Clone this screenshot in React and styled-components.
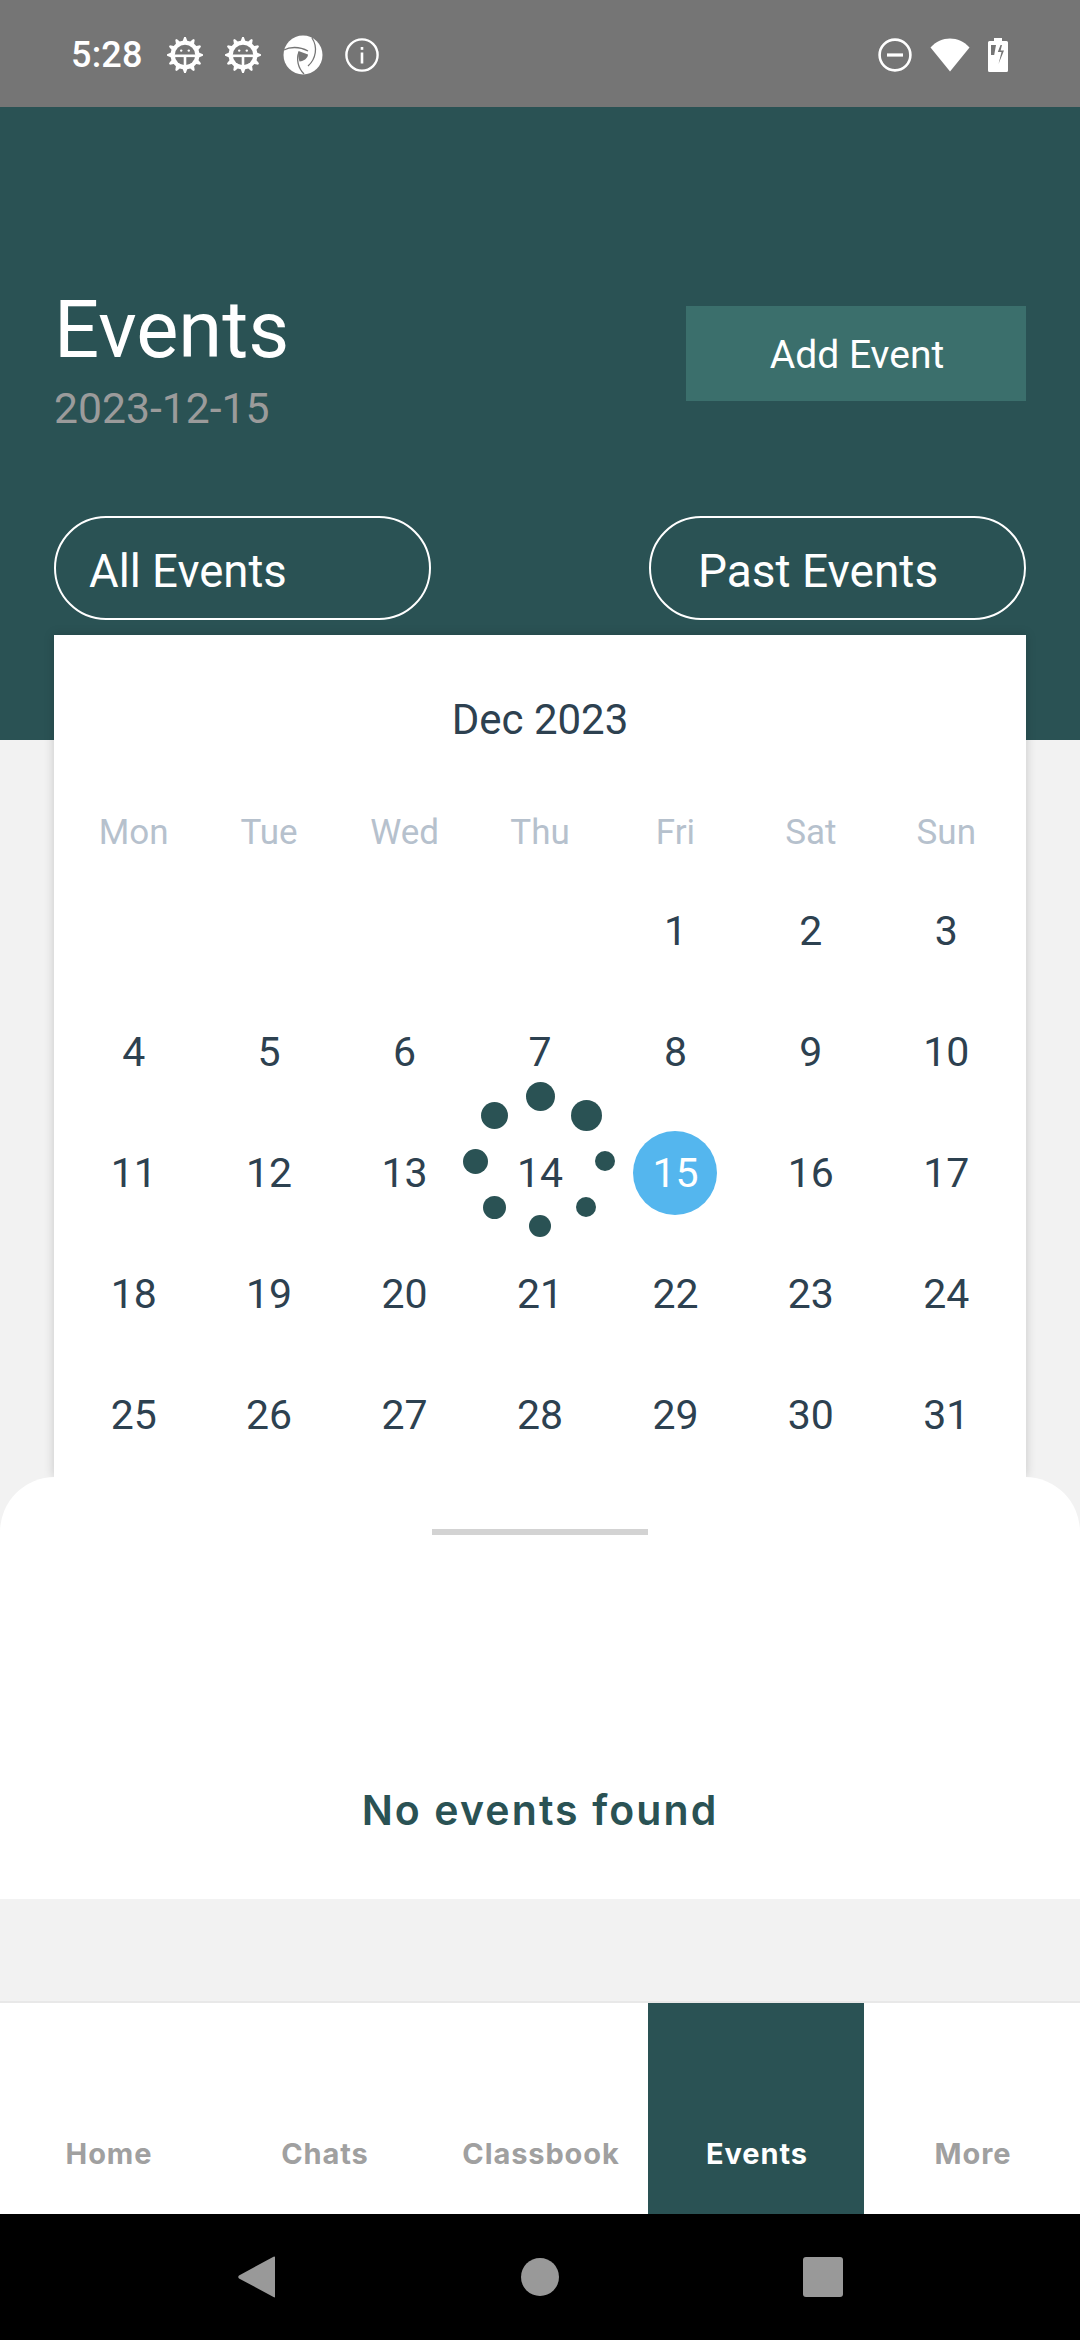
import React from "react";
import styled, { createGlobalStyle } from "styled-components";

const Global = createGlobalStyle`
  html, body { margin: 0; padding: 0; background: #f2f2f2; }
  * { box-sizing: border-box; }
`;

const TEAL = "#2a5254";
const Root = styled.div`
  position: relative; width: 1080px; height: 2340px; overflow: hidden;
  display: flex; flex-direction: column; background: #f2f2f2;
  font-family: Roboto, "Liberation Sans", sans-serif;
`;
const StatusBar = styled.div`
  height: 107px; flex: none; background: #757575; color: #fff;
  display: flex; align-items: center; justify-content: space-between;
  padding: 2px 72px 0 71px;
`;
const StatusGroup = styled.div`
  display: flex; align-items: center; gap: ${p => p.$gap}px;
`;
const Clock = styled.span`
  font-size: 36px; font-weight: 500; letter-spacing: 0.2px; margin-right: 2px; line-height: 1;
`;
const Header = styled.header`
  height: 633px; flex: none; background: ${TEAL};
  padding: 178px 54px 0; display: flex; flex-direction: column;
`;
const TopRow = styled.div`
  display: flex; justify-content: space-between; align-items: flex-start; height: 148px;
`;
const Title = styled.h1`
  margin: 0; font-size: 79.5px; line-height: 90px; font-weight: 400; color: #fff;
`;
const DateText = styled.div`
  margin-top: 9px; font-size: 42.7px; line-height: 48px; color: #9b9b9b;
`;
const AddButton = styled.button`
  margin-top: 21px; width: 340px; height: 95px; border: 0; background: #3b6f6c; color: #fff;
  font: 400 39px Roboto, sans-serif; padding: 3px 0 0 2px;
`;
const FilterRow = styled.div`
  margin-top: 83px; display: flex; justify-content: space-between;
`;
const Pill = styled.div`
  width: 377px; height: 104px; border: 2.5px solid #fff; border-radius: 52px; color: #fff;
  font-size: ${p => p.$size}px; padding: 6px 0 0 ${p => p.$inset}px; display: flex; align-items: center;
`;
const Calendar = styled.section`
  margin: -105px 54px 0; height: 842px; flex: none; background: #fff; color: #2d4150;
  box-shadow: 0 0 10px rgba(0,0,0,.18); padding: 44px 12px 0; position: relative;
`;
const Month = styled.div`
  height: 80px; margin-bottom: 36px; display: flex; align-items: center; justify-content: center;
  font-size: 42px;
`;
const Grid = styled.div`
  display: grid; grid-template-columns: repeat(7, 1fr);
`;
const WeekDay = styled.div`
  height: 75px; display: flex; align-items: center; justify-content: center;
  font-size: 35px; color: #b6c1cd;
`;
const Day = styled.div`
  height: 121px; display: flex; align-items: center; justify-content: center;
  font-size: 41px; font-weight: 400;
`;
const Selected = styled.span`
  width: 84px; height: 84px; border-radius: 50%; background: #54b6ee; color: #fff;
  display: flex; align-items: center; justify-content: center;
`;
const Sheet = styled.section`
  position: relative; height: 422px; flex: none; background: #fff;
  border-radius: 55px 55px 0 0; display: flex; flex-direction: column; align-items: center;
`;
const Handle = styled.div`
  width: 216px; height: 6px; margin-top: 52px; background: #d3d3d3;
`;
const Empty = styled.div`
  margin-top: 250px; font: 600 41px "Inter", sans-serif; letter-spacing: 2.1px;
  color: ${TEAL}; line-height: 50px;
`;
const Nav = styled.nav`
  margin-top: auto; height: 213px; flex: none; background: #fff; border-top: 2px solid #e8e8e8;
  display: grid; grid-template-columns: repeat(5, 216px);
`;
const NavItem = styled.div`
  background: ${p => (p.$active ? TEAL : "transparent")};
  color: ${p => (p.$active ? "#fff" : "#a0a0a0")};
  font: 700 29px "Inter", sans-serif; letter-spacing: 0.9px; text-align: center;
  padding: 133px 0 0 2px; line-height: 36px;
`;
const SystemBar = styled.div`
  height: 126px; flex: none; background: #000; display: flex; align-items: center;
  justify-content: center;
`;
const SysSlot = styled.div`
  width: 283px; display: flex; justify-content: center;
`;
const Spinner = styled.div`
  position: absolute; left: 0; top: 0; width: 0; height: 0;
`;
const Dot = styled.span`
  position: absolute; border-radius: 50%; background: ${TEAL};
  left: ${p => p.$x - p.$d / 2}px; top: ${p => p.$y - p.$d / 2}px;
  width: ${p => p.$d}px; height: ${p => p.$d}px;
`;

const gearPoints = (() => {
  const pts = [];
  const n = 12;
  for (let i = 0; i < n; i++) {
    const a = (i / n) * Math.PI * 2 - Math.PI / 2;
    const w = (Math.PI / n) * 0.45;
    const p = (r, t) => `${(18 + r * Math.cos(t)).toFixed(2)},${(18 + r * Math.sin(t)).toFixed(2)}`;
    pts.push(p(14.5, a - w * 1.3), p(18, a - w * 0.4), p(18, a + w * 0.4), p(14.5, a + w * 1.3));
  }
  return pts.join(" ");
})();

const Gear = () => (
  <svg width="36" height="36" viewBox="0 0 36 36">
    <polygon points={gearPoints} fill="#fff" />
    <circle cx="18" cy="18" r="10.2" fill="#757575" />
    <rect x="7.5" y="17.5" width="21" height="2.6" fill="#fff" />
    <rect x="16.7" y="18" width="2.6" height="11" fill="#fff" />
    <circle cx="14.2" cy="13.6" r="1.2" fill="#fff" />
    <circle cx="21.8" cy="13.6" r="1.2" fill="#fff" />
  </svg>
);
const Shutter = () => (
  <svg width="40" height="40" viewBox="0 0 40 40">
    <circle cx="20" cy="20" r="19.5" fill="#fff" />
    <g fill="none" stroke="#757575" strokeWidth="1.3">
      <path d="M1 15 C6 12 16 11 25 16" />
      <path d="M29 3 C35 12 33 24 25 31" />
      <path d="M16 17 C13 24 15 33 21 39" />
    </g>
    <path d="M15.5 16 L25 19.5 C25 23 21 26 16.5 26.5 C15 23 15 19 15.5 16Z" fill="#757575" />
  </svg>
);
const Info = () => (
  <svg width="34" height="34" viewBox="0 0 34 34">
    <circle cx="17" cy="17" r="15.6" fill="none" stroke="#fff" strokeWidth="2.4" />
    <rect x="15.7" y="14.5" width="2.6" height="11" fill="#fff" />
    <rect x="15.7" y="9" width="2.6" height="2.8" fill="#fff" />
  </svg>
);
const Dnd = () => (
  <svg width="34" height="34" viewBox="0 0 34 34">
    <circle cx="17" cy="17" r="15.4" fill="none" stroke="#fff" strokeWidth="2.6" />
    <rect x="9" y="15.4" width="16" height="3.2" fill="#fff" />
  </svg>
);
const Wifi = () => (
  <svg width="40" height="34" viewBox="0 0 40 34">
    <path d="M0.5 9.5 C11 -2.5 29 -2.5 39.5 9.5 L20 33.5 Z" fill="#fff" />
  </svg>
);
const Battery = () => (
  <svg width="20" height="34" viewBox="0 0 20 34">
    <path d="M6 0 H14 V3 H18.5 Q20 3 20 4.5 V32.5 Q20 34 18.5 34 H1.5 Q0 34 0 32.5 V4.5 Q0 3 1.5 3 H6 Z" fill="#fff" />
    <path d="M8 7 H3 V17 H6.2 Z M12.5 7 L9.8 14 H13.5 L10.5 26 L16 12.5 H12.6 L14 7 Z" fill="#757575" />
  </svg>
);
const Back = () => (
  <svg width="38" height="42" viewBox="0 0 38 42">
    <path d="M37 1.5 V40.5 Q37 42 35.5 41 L1 22.5 Q-0.5 21 1 19.5 L35.5 0.8 Q37 0 37 1.5Z" fill="#999" />
  </svg>
);
const Home = () => (
  <svg width="38" height="38" viewBox="0 0 38 38"><circle cx="19" cy="19" r="19" fill="#999" /></svg>
);
const Recents = () => (
  <svg width="40" height="40" viewBox="0 0 40 40"><rect width="40" height="40" rx="3" fill="#999" /></svg>
);

const weekDays = ["Mon", "Tue", "Wed", "Thu", "Fri", "Sat", "Sun"];
const cells = [...Array(4).fill(null), ...Array.from({ length: 31 }, (_, i) => i + 1)];
const tabs = ["Home", "Chats", "Classbook", "Events", "More"];
const dots = [
  [540, 1096, 29], [586, 1115, 31], [605, 1161, 20], [586, 1207, 20],
  [540, 1226, 22], [494, 1207, 23], [475, 1161, 25], [494, 1115, 27],
];

export default function App() {
  return (
    <Root>
      <Global />
      <StatusBar>
        <StatusGroup $gap={22}>
          <Clock>5:28</Clock>
          <Gear />
          <Gear />
          <Shutter />
          <Info />
        </StatusGroup>
        <StatusGroup $gap={18}>
          <Dnd />
          <Wifi />
          <Battery />
        </StatusGroup>
      </StatusBar>
      <Header>
        <TopRow>
          <div>
            <Title>Events</Title>
            <DateText>2023-12-15</DateText>
          </div>
          <AddButton>Add Event</AddButton>
        </TopRow>
        <FilterRow>
          <Pill $inset={33} $size={45.5}>All Events</Pill>
          <Pill $inset={47} $size={46}>Past Events</Pill>
        </FilterRow>
      </Header>
      <Calendar>
        <Month>Dec 2023</Month>
        <Grid>
          {weekDays.map(d => <WeekDay key={d}>{d}</WeekDay>)}
          {cells.map((d, i) => (
            <Day key={i}>{d === 15 ? <Selected>{d}</Selected> : d}</Day>
          ))}
        </Grid>
      </Calendar>
      <Sheet>
        <Handle />
        <Empty>No events found</Empty>
      </Sheet>
      <Nav>
        {tabs.map(t => <NavItem key={t} $active={t === "Events"}>{t}</NavItem>)}
      </Nav>
      <SystemBar>
        <SysSlot><Back /></SysSlot>
        <SysSlot><Home /></SysSlot>
        <SysSlot><Recents /></SysSlot>
      </SystemBar>
      <Spinner>
        {dots.map(([x, y, d]) => <Dot key={x + "-" + y} $x={x} $y={y} $d={d} />)}
      </Spinner>
    </Root>
  );
}
